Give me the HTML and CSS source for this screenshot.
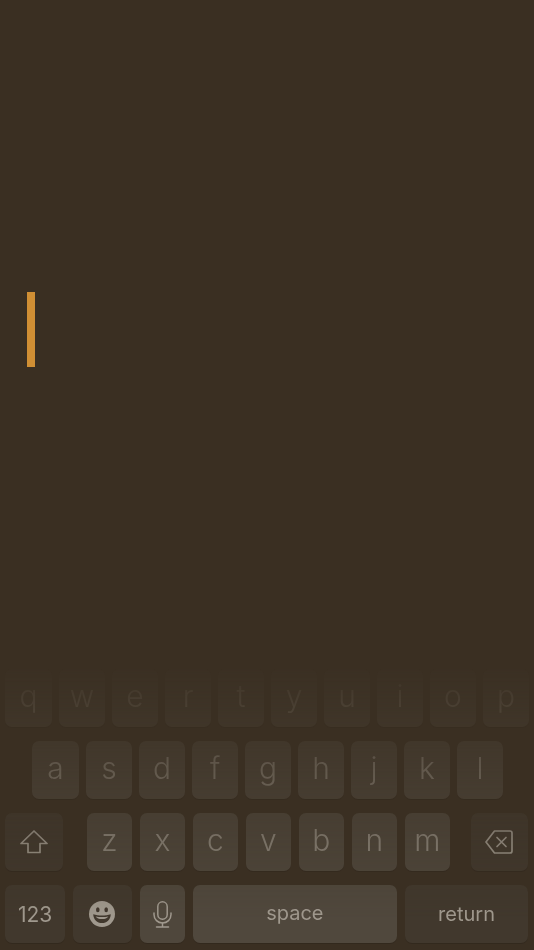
FILE: index.html
```html
<!DOCTYPE html>
<html lang="en">
<head>
  <meta charset="UTF-8" />
  <meta name="viewport" content="width=device-width, initial-scale=1" />
  <title>Editor</title>
  <link rel="stylesheet" href="styles.css">
</head>
<body>
  <div class="editor">
    <div class="caret"></div>
  </div>

  <div class="keyboard">
    <div class="row">
      <div class="key first">q</div>
      <div class="key">w</div>
      <div class="key">e</div>
      <div class="key">r</div>
      <div class="key">t</div>
      <div class="key">y</div>
      <div class="key">u</div>
      <div class="key">i</div>
      <div class="key">o</div>
      <div class="key">p</div>
    </div>
    <div class="row home">
      <div class="key first">a</div>
      <div class="key">s</div>
      <div class="key">d</div>
      <div class="key">f</div>
      <div class="key">g</div>
      <div class="key">h</div>
      <div class="key">j</div>
      <div class="key">k</div>
      <div class="key">l</div>
    </div>
    <div class="row">
      <div class="key dark shift">
        <svg width="28" height="24" viewBox="0 0 28 24" fill="none" stroke="currentColor" stroke-width="1.7" stroke-linejoin="round">
          <path d="M14 1 L27 13.5 H20 V22.5 H8 V13.5 H1 Z" />
        </svg>
      </div>
      <div class="key">z</div>
      <div class="key">x</div>
      <div class="key">c</div>
      <div class="key">v</div>
      <div class="key">b</div>
      <div class="key">n</div>
      <div class="key">m</div>
      <div class="key dark delete">
        <svg width="28" height="24" viewBox="0 0 28 24" fill="none" stroke="currentColor" stroke-width="1.7" stroke-linejoin="round" stroke-linecap="round">
          <path d="M9.5 1 H25 A2 2 0 0 1 27 3 V21 A2 2 0 0 1 25 23 H9.5 L1 12 Z" />
          <path d="M12 7.5 L21 16.5 M21 7.5 L12 16.5" />
        </svg>
      </div>
    </div>
    <div class="row">
      <div class="key dark mode">123</div>
      <div class="key dark emoji">
        <svg width="26" height="26" viewBox="0 0 26 26">
          <circle cx="13" cy="13" r="13" fill="currentColor" />
          <ellipse cx="8.8" cy="8.8" rx="1.8" ry="2.5" fill="#41382d" />
          <ellipse cx="17.2" cy="8.8" rx="1.8" ry="2.5" fill="#41382d" />
          <path d="M4.2 13.2 C9.5 15 16.5 15 21.8 13.2 C21.4 18.8 17.8 22 13 22 C8.2 22 4.6 18.8 4.2 13.2 Z" fill="#41382d" />
          <path d="M6.6 15.4 C10.5 16.3 15.5 16.3 19.4 15.4 C18.4 17 16 18 13 18 C10 18 7.6 17 6.6 15.4 Z" fill="currentColor" />
        </svg>
      </div>
      <div class="key mic">
        <svg width="19" height="27" viewBox="0 0 19 27" fill="none" stroke="currentColor" stroke-width="1.5" stroke-linecap="round">
          <rect x="4.8" y="0.8" width="9.4" height="17.4" rx="4.7" />
          <path d="M1 12 V13.5 C1 18.5 4.8 22 9.5 22 C14.2 22 18 18.5 18 13.5 V12" />
          <path d="M9.5 22 V26 M3.5 26 H15.5" />
        </svg>
      </div>
      <div class="key space">space</div>
      <div class="key dark return">return</div>
    </div>
  </div>
</body>
</html>
```

FILE: styles.css
```css
body {
  margin: 0;
  height: 950px;
  background: #3a2f22;
  overflow: hidden;
  font-family: Inter, "Liberation Sans", sans-serif;
  display: flex;
  flex-direction: column;
}

.editor {
  flex: 1;
  padding: 292px 0 0 27px;
}

.caret {
  width: 8px;
  height: 75px;
  background: #d08f34;
}

/* keyboard fades out towards the top */
.keyboard {
  display: flex;
  flex-direction: column;
  gap: 14px;
  padding: 0 5.3px 7px;
  -webkit-mask-image: linear-gradient(to bottom, rgba(0, 0, 0, 0.04) 0, rgba(0, 0, 0, 0.2) 40px, rgba(0, 0, 0, 0.5) 110px, rgba(0, 0, 0, 0.74) 175px, rgba(0, 0, 0, 1) 250px);
  mask-image: linear-gradient(to bottom, rgba(0, 0, 0, 0.04) 0, rgba(0, 0, 0, 0.2) 40px, rgba(0, 0, 0, 0.5) 110px, rgba(0, 0, 0, 0.74) 175px, rgba(0, 0, 0, 1) 250px);
}

.row {
  display: flex;
  gap: 7.8px;
  height: 58px;
}

.home {
  padding-left: 27px;
}

.key {
  width: 45.2px;
  flex: none;
  display: flex;
  align-items: center;
  justify-content: center;
  border-radius: 7px;
  background: #4f473c;
  color: #8f887d;
  font-size: 30px;
  font-weight: 300;
  padding-bottom: 4px;
  box-sizing: border-box;
  box-shadow: 0 1px 0 rgba(0, 0, 0, 0.12);
}

.first {
  width: 46.4px;
}

.dark {
  background: #41382d;
  color: #a0998e;
}

.shift {
  width: 58px;
  margin-right: 15.7px;
  padding-bottom: 0;
}

.delete {
  width: 57.2px;
  margin-left: 13.2px;
  padding-bottom: 0;
}

.mode {
  width: 59.5px;
  font-size: 21px;
  font-weight: 400;
  padding-bottom: 0;
}

.emoji {
  width: 59.5px;
  padding-bottom: 0;
}

.mic {
  color: #a0998e;
  padding-bottom: 0;
}

.space {
  width: 204px;
  background: #50483d;
  color: #a0998e;
  font-size: 20px;
  font-weight: 400;
  padding-bottom: 3px;
}

.return {
  width: 123.7px;
  font-size: 20px;
  font-weight: 400;
  padding-bottom: 0;
}
```
